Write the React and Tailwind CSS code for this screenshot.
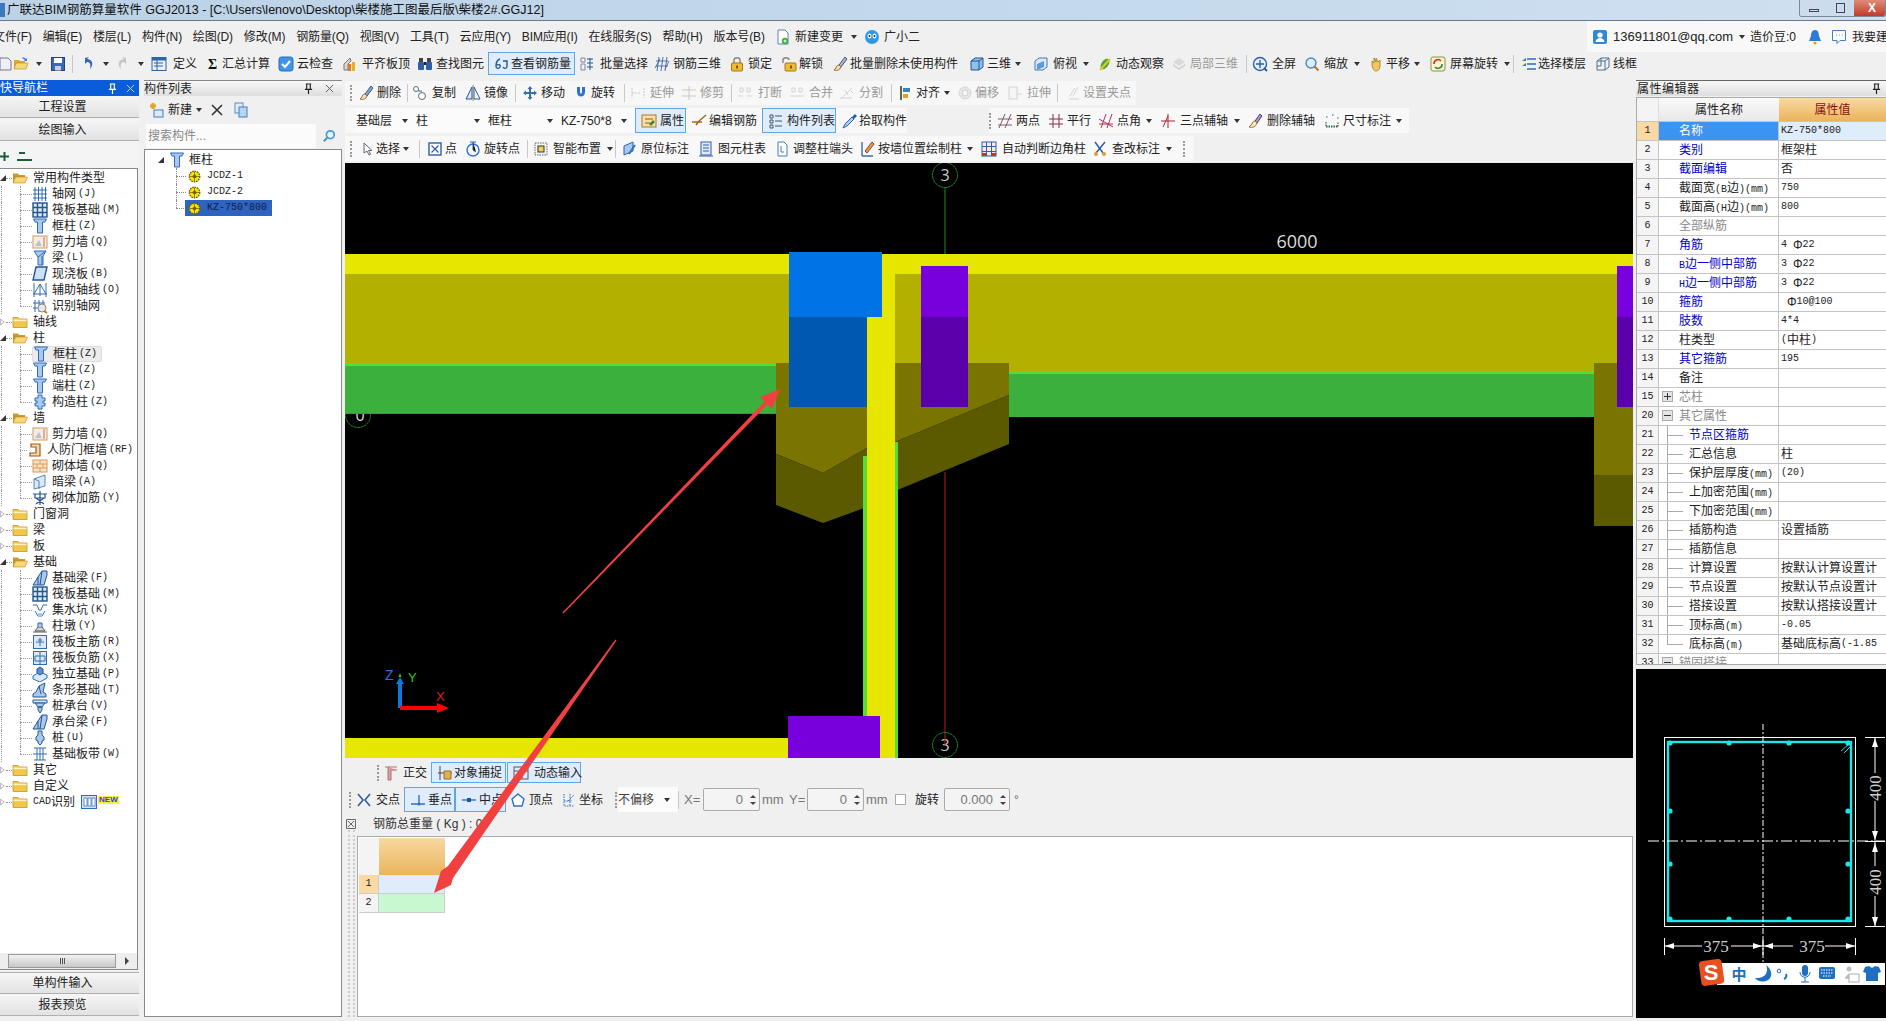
import React from 'react';

const B = '#2f6db5', L = '#a9c8ee', Y = '#f3c64a', O = '#b98a20';
const Svg = ({ children, className = 'w-4 h-4' }) => <svg viewBox="0 0 16 16" className={`${className} shrink-0`}>{children}</svg>;

const icons = {
  folderO: <><path d="M1 3.500h5l1 1.500h6v8H1z" fill="#c99a2a" /><path d="M1 13 3.500 7H15.500L13 13z" fill="#f7d774" stroke={O} strokeWidth=".6" /></>,
  folderC: <><path d="M1 3.500h5l1 1.500h8v8.500H1z" fill={Y} stroke={O} strokeWidth=".7" /><rect x="1.500" y="5.600" width="13" height="1.600" fill="#fff3bd" /></>,
  col: <path d="M1.500 1h13l-1.500 3h-2.500v11h-5V4H3z" fill={L} stroke={B} strokeWidth="1" />,
  grid: <path d="M3 1v14M6.500 1v14M10 1v14M13.500 1v14M1 4h14M1 8h14M1 12h14" stroke={B} strokeWidth="1" fill="none" />,
  raft: <><rect x="1" y="1" width="14" height="14" fill="#dbe8f8" stroke="#24568f" strokeWidth="1.400" /><path d="M5.500 1v14M10.500 1v14M1 5.500h14M1 10.500h14" stroke="#24568f" strokeWidth="1.400" /></>,
  wall: <><rect x="1" y="2" width="14" height="12" fill="#f4eee2" stroke="#d09a66" /><path d="M3 12 7 6l3 6z" fill="#b8c4d0" /><path d="M12 3v10" stroke="#d06a4a" /></>,
  beam: <><path d="M2 1h12l-3 5v9H6V7z" fill={L} stroke={B} /><path d="M6 7 14 1M10 15V6" stroke={B} /></>,
  slab: <path d="M4 1h11l-3 13H1z" fill="#cfe0f6" stroke="#24568f" strokeWidth="1.400" />,
  aux: <path d="M2 1v14M14 1v14M1 12h14M2 12 8 2l6 10M8 2v12" stroke={B} fill="none" />,
  idgrid: <><path d="M3 2v12M7 2v12M11 2v12M1 5h12M1 10h12" stroke={B} fill="none" /><circle cx="10" cy="10" r="4" fill="#e8e8e8" stroke="#888" /><path d="m12 13 3 2" stroke="#c08020" strokeWidth="2" /></>,
  door: <path d="M4 2h9v12H3v-3h6V5H4z" fill="#f6d9a8" stroke="#a05a20" strokeWidth="1.200" />,
  brick: <><rect x="1" y="2" width="14" height="12" fill="#fbe3c4" stroke="#d69a5a" /><path d="M1 6h14M1 10h14M8 2v4M5 6v4M11 6v4M8 10v4" stroke="#d69a5a" /></>,
  dbeam: <><path d="M2 5 13 1v11L2 15z" fill="#dbe8f8" stroke="#5b84b8" /><path d="M2 5l5 2v8" stroke="#5b84b8" fill="none" /></>,
  rwall: <path d="M1 4h14M8 1v14M3 4v4h10V4M4 8l8 6M12 8l-8 6" stroke="#24568f" strokeWidth="1.200" fill="none" />,
  gz: <path d="M6 1h4v3h3v3h-2v2h2v3h-3v3H6v-3H3V9h2V7H3V4h3z" fill={L} stroke={B} />,
  fbeam: <><path d="M10 1 15 1 15 5 12 15H1L6 7z" fill={L} stroke="#24568f" /><path d="M6 7v8M10 1 8 15" stroke="#24568f" /></>,
  pit: <><path d="M1 3h4l2 5h2l2-5h4M3 9l3 5h4l3-5" stroke={B} fill="none" /><path d="M6 11h4v3H6z" fill={L} /></>,
  pier: <><path d="M1 13h14v2H1z" fill="#b0b0b0" /><path d="M3 13 6 9h4l3 4z" fill="#d8d8d8" stroke="#555" /><path d="M6 9V5h4v4" fill={L} stroke={B} /></>,
  rmain: <><rect x="1.500" y="1.500" width="13" height="13" fill="#dbe8f8" stroke={B} /><path d="M8 4v8M4 8h8M6 6h4" stroke={B} fill="none" /></>,
  rneg: <><rect x="1.500" y="1.500" width="13" height="13" fill="#dbe8f8" stroke={B} /><path d="M8 2v12M3 6h10v5H3z" stroke={B} fill="none" /></>,
  iso: <><path d="M1 10 8 6l7 3v3l-7 4-7-3z" fill="#dbe8f8" stroke={B} /><path d="M5 3l3-2 3 2v4l-3 2-3-2z" fill="#5b8fd0" stroke="#24568f" /></>,
  strip: <><path d="M1 15v-3l3-2 3-6 6-3-2 9 3 2v3z" fill={L} stroke="#24568f" /><path d="M7 4l2 8" stroke="#24568f" /></>,
  cap: <><path d="M1 2h14v3H1z" fill="#dbe8f8" stroke="#24568f" /><path d="M3 5h10l-3 4H6zM6 9h4v3l-2 3-2-3z" fill={L} stroke="#24568f" /></>,
  pile: <path d="M6 1h4v4l2 2v3l-2 1v2l-2 2-2-2v-2l-2-1V7l2-2z" fill={L} stroke="#24568f" />,
  band: <path d="M2 2h12M2 14h12M5 2v12M11 2v12M8 2v12M1 8h14" stroke={B} fill="none" />,
  cad: <><rect x=".5" y="1.500" width="15" height="13" fill="#cfe2f8" stroke={B} /><rect x="3" y="4" width="3" height="8" fill="#fff" stroke={B} strokeWidth=".7" /><rect x="7" y="4" width="3" height="8" fill="#fff" stroke={B} strokeWidth=".7" /><rect x="11" y="4" width="3" height="8" fill="#fff" stroke={B} strokeWidth=".7" /></>,
  gear: <><circle cx="8" cy="8" r="6.500" fill="#f8e800" stroke="#6a5c00" strokeDasharray="2 1" strokeWidth="1.600" /><circle cx="8" cy="8" r="2.500" fill="#8a7a00" /><path d="M8 2v12M2 8h12" stroke="#6a5c00" strokeWidth=".9" /></>,
  doc: <><path d="M3 1h7l3 3v11H3z" fill="#fff" stroke="#5b84b8" /><circle cx="10" cy="12" r="3.200" fill="#47a83f" /><path d="M8.500 12h3M10 10.500v3" stroke="#fff" /></>,
  robot: <><circle cx="8" cy="8" r="7" fill="#2e9ae6" /><ellipse cx="5.500" cy="7" rx="2" ry="2.500" fill="#fff" /><ellipse cx="10.500" cy="7" rx="2" ry="2.500" fill="#fff" /><circle cx="5.500" cy="7" r="1" fill="#135" /><circle cx="10.500" cy="7" r="1" fill="#135" /></>,
  user: <><rect x="1" y="1" width="14" height="14" rx="2" fill="#2e8ad8" /><circle cx="8" cy="6" r="2.600" fill="#fff" /><path d="M3.500 13c.5-3 2.500-4 4.500-4s4 1 4.500 4z" fill="#fff" /></>,
  bell: <><path d="M8 1c3 0 4 3 4 6l2 5H2l2-5c0-3 1-6 4-6z" fill="#2e7ad8" /><circle cx="8" cy="14" r="1.500" fill="#e0a020" /></>,
  chat: <><path d="M1.500 1.500h13v10H9l-3 3v-3H1.500z" fill="#fff" stroke="#3d7fd0" /><path d="M5 6h.8M8 6h.8M11 6h.8" stroke="#3d7fd0" /></>,
  page: <path d="M3 2h8l3 3v9H3z" fill="#eef" stroke="#778" />,
  open: <><path d="M1 4h5l1 1h5v8H1z" fill="#d9a93a" /><path d="M1 13 3 7h12l-2 6z" fill="#f7d774" stroke={O} strokeWidth=".6" /><path d="M9 2c2-1 3 0 4 1l1-1v3h-3l1-1c-1-1-2-1-3-2z" fill="#3a7fd0" /></>,
  save: <><rect x="1.500" y="1.500" width="13" height="13" fill="#3b69b8" stroke="#24447f" /><rect x="4" y="2" width="8" height="5" fill="#fff" /><rect x="5" y="10" width="6" height="4.500" fill="#ccd" /></>,
  undo: <path d="M5 2v6l2-2c3 0 4 2 3 7 3-3 4-9-3-10L9 1z" fill="#2f64b8" />,
  redo: <path d="M11 2v6L9 6c-3 0-4 2-3 7-3-3-4-9 3-10L7 1z" fill="#a8a8a8" />,
  table: <><rect x="1" y="1.500" width="14" height="13" fill="#e8f0fa" stroke="#2f64a8" /><rect x="1" y="1.500" width="14" height="3" fill="#2f64a8" /><path d="M6 4v10M3 7h9M3 10h9" stroke="#2f64a8" /></>,
  sigma: <text x="2" y="13" fontSize="14" fontFamily="'Liberation Serif'" fontWeight="700" fill="#111">Σ</text>,
  check: <><rect x="1" y="1" width="14" height="14" rx="2.500" fill="#3d94e8" stroke="#2b6cb0" /><path d="m4 8 3 3 5-6" stroke="#fff" strokeWidth="2" fill="none" /></>,
  level: <><path d="M2 14V8l6-6 1 3-3 3v6z" fill="#d9d9d9" stroke="#777" /><rect x="6" y="8" width="3" height="7" fill="#e07a20" /><rect x="10" y="6" width="3" height="9" fill="#e8b020" /></>,
  binoc: <><rect x="2" y="2" width="4" height="4" fill="#444" /><rect x="10" y="2" width="4" height="4" fill="#444" /><rect x="1" y="6" width="6" height="8" rx="1" fill="#2f5ea8" /><rect x="9" y="6" width="6" height="8" rx="1" fill="#2f5ea8" /><rect x="7" y="6" width="2" height="3" fill="#222" /></>,
  rebar: <path d="M6 3C3 4 2 7 2 10s3 3 4 1-1-3-3-2M9 5h4v5c0 3-3 3-4 1" stroke="#24568f" strokeWidth="1.400" fill="none" />,
  batch: <><path d="M2 2h4v4H2zM2 8h4v6H2z" stroke="#7a8a9a" fill="#eef" /><path d="M8 3h6M8 7h6M8 11h6M11 2v12" stroke="#24568f" /></>,
  rebar3: <path d="M2 5h12M2 10h12M5 1 3 15M9 1 7 15M13 1l-2 14M1 12 6 3M15 5l-4 8" stroke="#3f66a0" fill="none" strokeWidth=".9" />,
  lock: <><path d="M5 7V4c0-3 6-3 6 0v3" stroke="#888" strokeWidth="1.500" fill="none" /><rect x="2.500" y="7" width="11" height="8" rx="1" fill="#eebb33" stroke="#a07818" /><rect x="7" y="9.500" width="2" height="3" fill="#7a5a10" /></>,
  unlock: <><path d="M2 7V4c0-3 6-3 6 0" stroke="#888" strokeWidth="1.500" fill="none" /><rect x="4" y="7" width="11" height="8" rx="1" fill="#eebb33" stroke="#a07818" /><rect x="9" y="9.500" width="2" height="3" fill="#7a5a10" /></>,
  brush: <><path d="M13 1 7 9l2 2 6-8z" fill="#a0b8d8" stroke="#556" /><path d="M7 9c-2 0-3 2-3 3l-2 2c3 1 6 0 7-3z" fill="#eeddbb" stroke="#a06a30" /></>,
  cube: <><path d="M2 5l4-3h8v9l-4 3H2z" fill="#8fc0ee" stroke="#24568f" /><path d="M2 5h8v9M10 5l4-3" stroke="#24568f" fill="none" /></>,
  cube2: <><path d="M2 5l4-3h8v9l-4 3H2z" fill="#dbeafa" stroke="#3f78b8" /><path d="M4 14V8l7-3v6z" fill="#5b9ade" /></>,
  orbit: <><ellipse cx="8" cy="8" rx="3.500" ry="6" fill="#47a83f" transform="rotate(35 8 8)" /><path d="M3 14 13 3" stroke="#e8c820" strokeWidth="2" /></>,
  part: <><path d="M8 2l6 4-6 4-6-4z" fill="#ccc" /><path d="M2 8l6 4 6-4v2l-6 4-6-4z" fill="#bbb" /></>,
  full: <><circle cx="8" cy="8" r="6.500" fill="#e4effb" stroke="#2f5ea8" strokeWidth="1.400" /><path d="M8 4v8M4 8h8" stroke="#2f5ea8" strokeWidth="1.400" /><path d="m12 12 3 3" stroke="#2f5ea8" strokeWidth="2" /></>,
  zoom: <><circle cx="7" cy="7" r="5" fill="#dcecfb" stroke="#4c87c8" strokeWidth="1.400" /><path d="m10.500 10.500 4 4" stroke="#b07820" strokeWidth="2" /></>,
  hand: <path d="M4 8V5l2 2V2l2 4V2l2 4 2-2v6c0 3-2 5-4 5s-4-3-4-7z" fill="#f0c860" stroke="#a07820" strokeWidth=".8" />,
  rotate: <><rect x="1" y="1" width="14" height="14" rx="2" fill="#fff3d0" stroke="#7a9a4a" /><path d="M4 8a4 4 0 0 1 7-3" stroke="#d03020" strokeWidth="1.600" fill="none" /><path d="M12 8a4 4 0 0 1-7 3" stroke="#2f8a3a" strokeWidth="1.600" fill="none" /></>,
  layers: <><path d="M6 3h9M6 8h9M6 13h9" stroke="#2f6db5" strokeWidth="1.600" /><path d="M5 2 1 5h4zM5 7 1 10h4z" fill="#2f9a4a" /></>,
  wire: <path d="M2 5l4-3h8v9l-4 3H2zM2 5h8v9M10 5l4-3M6 2v8H2" stroke="#4f6f90" fill="none" />,
  del: <><path d="M13 1 7 9l2 2 6-8z" fill="#7fa8d8" stroke="#456" /><path d="M7 9c-2 0-3 2-3 3l-2 2c3 1 6 0 7-3z" fill="#eee6c8" stroke="#a06a30" /></>,
  copy: <><circle cx="4" cy="4" r="2.500" fill="#fff" stroke="#667" /><circle cx="10" cy="11" r="3.500" fill="#fff" stroke="#667" /><path d="M6 6l4 0" stroke="#2f6db5" /></>,
  mirror: <><path d="M7 2v12H1z" fill="#dbe8f8" stroke="#24568f" /><path d="M9 2v12h6z" fill="#fff" stroke="#24568f" /><path d="M8 0v16" stroke="#888" /></>,
  move: <path d="M8 1l2.500 3H9v3h3V5.500L15 8l-3 2.500V9H9v3h1.500L8 15l-2.500-3H7V9H4v1.500L1 8l3-2.500V7h3V4H5.500z" fill="#3a6ea8" />,
  rot: <path d="M4 2v5c0 6 8 6 8 0V2h-3v5c0 2-2 2-2 0V2z" fill="#2f6fd0" />,
  ext: <path d="M2 3v10M2 8h8M14 3v10" stroke="#aaa" fill="none" strokeDasharray="2 1" />,
  trim: <path d="M8 1v14M1 5h14M1 11h14" stroke="#aaa" />,
  brk: <path d="M1 11h5M10 11h5M3 3h3v4H3zM10 3h3v4h-3z" stroke="#bbb" fill="none" />,
  merge: <path d="M1 11h14M3 3h3v4H3zM10 3h3v4h-3z" stroke="#bbb" fill="none" />,
  split: <path d="M1 13 13 13M3 13 13 3M6 5l3 5M12 6l2 2" stroke="#bbb" fill="none" />,
  align: <><path d="M3 1v14" stroke="#222" strokeWidth="1.400" /><rect x="5" y="3" width="7" height="4" fill="#3a7fd0" /><rect x="5" y="9" width="5" height="4" fill="#e0a030" /></>,
  off: <><circle cx="8" cy="8" r="6" fill="#ddd" stroke="#bbb" /><circle cx="8" cy="8" r="3" fill="#f4f4f4" stroke="#bbb" /></>,
  stretch: <><rect x="2" y="2" width="8" height="12" fill="#f4f4f4" stroke="#bbb" /><path d="M10 9h5" stroke="#bbb" /></>,
  grip: <path d="M3 14h10M12 2 7 11M9 3l-5 8" stroke="#bbb" fill="none" />,
  attr: <><rect x="1" y="2" width="14" height="12" fill="#f8e0a8" stroke="#b07820" /><path d="M4 6h8M4 10h5" stroke="#a05020" /><path d="m8 11 4-4 2 2-4 4z" fill="#3a8a3a" /></>,
  edit: <path d="M15 2 8 8M1 9h10M8 8l-3 4" stroke="#a06a20" strokeWidth="1.600" fill="none" />,
  list: <><path d="M2 2h3v3H2zM2 7h3v3H2zM2 12h3v3H2z" fill="none" stroke="#456" /><path d="M7 3h7M7 8h7M7 13h7" stroke="#456" strokeWidth="1.200" /></>,
  pick: <><path d="M13 1l2 2-3 3-2-2z" fill="#2f5ea8" /><path d="M10 4 3 11l-2 4 4-2 7-7z" fill="#a8d0f0" stroke="#2f5ea8" /></>,
  two: <path d="M2 15 8 1M8 15l6-14M1 6h14M1 12h14" stroke="#7a5a6a" fill="none" />,
  par: <path d="M5 1v14M11 1v14M1 6h14M1 11h14" stroke="#8a2a4a" fill="none" />,
  ang: <path d="M3 15 8 1M9 15l5-14M1 11h14M1 6 15 14" stroke="#b03050" fill="none" />,
  tri: <path d="M1 8h14M8 1v14M3 14 8 3" stroke="#b02030" fill="none" />,
  axdel: <><path d="M13 1 8 8l2 2 5-7z" fill="#b090d8" stroke="#446" /><path d="M8 8c-2 0-3 2-3 3l-3 3c3 1 7 0 8-4z" fill="#f0e8c0" stroke="#a06a30" /></>,
  dim: <path d="M2 9v5h12V9M2 13h12M2 4h2M8 2h2M13 5h2" stroke="#2a6a4a" strokeDasharray="1.500 1" fill="none" strokeWidth="1.200" />,
  sel: <path d="M5 2v10l3-2 2 4 1.500-.8-2-3.700h3.500z" fill="#fff" stroke="#667" />,
  pt: <><rect x="2" y="2" width="12" height="12" fill="#fff" stroke="#2f5ea8" strokeWidth="1.400" /><path d="m4.500 4.500 7 7m0-7-7 7" stroke="#2f5ea8" strokeWidth="1.200" /></>,
  rotpt: <><circle cx="8" cy="9" r="6" fill="none" stroke="#2f6fd0" strokeWidth="1.400" /><path d="M8 1v8l3 2" stroke="#2f5ea8" /><path d="M5 1h6" stroke="#2f5ea8" /></>,
  smart: <><rect x="2" y="2" width="12" height="12" fill="#f4f4f4" stroke="#666" strokeDasharray="1.500 1" /><rect x="5" y="5" width="6" height="6" fill="#f0d060" stroke="#333" /></>,
  mark: <><path d="M3 14V5l9-4v9z" fill="#a8c8f0" stroke="#2f5ea8" /><path d="m8 13 6-9" stroke="#2f6fd0" strokeWidth="2" /></>,
  coltab: <><rect x="3" y="1" width="10" height="13" fill="#e0ecfa" stroke="#2f5ea8" /><path d="M5 4h6M5 7h6M5 10h6M1 15h14" stroke="#2f5ea8" /></>,
  adj: <><path d="M4 1h6l3 3v11H4z" fill="#fff" stroke="#3f7fc0" /><path d="M7 5v6h3" stroke="#3f7fc0" fill="none" /></>,
  wallcol: <><path d="M3 1v14M3 15h11" stroke="#3a6ea8" strokeWidth="1.400" /><path d="m13 1-7 9 2 2 7-9z" fill="#e0a030" stroke="#845" /></>,
  auto: <><rect x="1" y="1" width="14" height="14" fill="#f8e8e8" stroke="#2f5ea8" /><path d="M5.500 1v14M10.500 1v14M1 5.500h14M1 10.500h14" stroke="#2f5ea8" /><rect x="1" y="12" width="4" height="3" fill="#d03020" /><rect x="11" y="12" width="4" height="3" fill="#d03020" /></>,
  chk: <><path d="M3 1l8 11M13 1 4 12" stroke="#2f5ea8" strokeWidth="1.500" /><circle cx="4" cy="13" r="2" fill="#e0a030" /><circle cx="12" cy="13" r="2" fill="#e0a030" /></>,
  ortho: <path d="M2 2h12M5 2v13h3V5h6" fill="#d8a0a0" stroke="#b07070" />,
  snap: <><path d="M3 1v14M1 8h14" stroke="#445" /><path d="M7 6h7v8H7z" fill="#e0b050" stroke="#a07020" /></>,
  dyn: <><rect x="1" y="2" width="14" height="12" fill="none" stroke="#556" /><path d="M1 6h14M5 10l5 3" stroke="#556" /></>,
  cross: <path d="m2 2 5 6-5 6m12-12L9 8l5 6" stroke="#2f5ea8" strokeWidth="1.600" fill="none" />,
  perp: <><path d="M1 12h14M9 3v9" stroke="#2f6fd0" strokeWidth="1.400" /><circle cx="9" cy="12" r="1.500" fill="#2f6fd0" /></>,
  mid: <><path d="M1 8h14" stroke="#2f6fd0" strokeWidth="1.400" /><rect x="6" y="6" width="4" height="4" fill="#24568f" /></>,
  vert: <path d="M8 2l6 5-2 7H4L2 7z" fill="#fff" stroke="#2f6fd0" strokeWidth="1.400" />,
  coord: <path d="M3 2v12h10M7 9l6-6M3 9h8M9 2v12" stroke="#2f6fd0" strokeDasharray="1.500 1" fill="none" />,
  plusNew: <><path d="M5 1v6M2 4h6" stroke="#e0a820" strokeWidth="3" /><rect x="6" y="8" width="9" height="7" fill="#dcecfb" stroke="#3f7fc0" /></>,
  copy2: <><rect x="2" y="1" width="8" height="10" fill="#dcecfb" stroke="#6a8ab0" /><rect x="6" y="5" width="8" height="10" fill="#b8d4f4" stroke="#3f7fc0" /></>,
};

const Ic = ({ n }) => <Svg>{icons[n]}</Svg>;
const Caret = ({ className = '' }) => <span className={`inline-block shrink-0 w-0 h-0 border-x-[3px] border-x-transparent border-t-[4px] border-t-[#333] ${className}`} />;
const Handle = ({ w = 'w-[8px]' }) => <div className={`${w} shrink-0 h-full flex items-center`}><div className="w-[2px] h-[16px] border-l-2 border-dotted border-[#999]" /></div>;
const Sep = ({ w }) => <div className={`${w} shrink-0 h-full flex items-center`}><div className="w-px h-[18px] bg-[#c8c8c8]" /></div>;

function Tool({ ic, t, w, drop, gray, active, gap = 'gap-[4px]' }) {
  return (
    <div className={`${w} ${gap} shrink-0 h-full flex items-center whitespace-nowrap ${gray ? 'text-[#9a9a9a]' : 'text-[#222]'} ${active ? 'bg-[#deecfb] border border-[#5fa6e4] pl-[5px]' : ''}`}>
      {ic && <span className={gray ? 'opacity-60 grayscale shrink-0' : 'shrink-0'}><Ic n={ic} /></span>}
      {t && <span>{t}</span>}
      {drop && <Caret className="ml-[2px]" />}
    </div>
  );
}

const Combo = ({ t, w }) => (
  <div className={`${w} shrink-0 h-full bg-[#fbfbfb] flex items-center justify-between pr-[8px] whitespace-nowrap overflow-hidden`}>
    <span>{t}</span><Caret />
  </div>
);

const Mix = ({ s }) => s.split(/([\x20-\x7e]+)/).map((p, i) => /^[\x20-\x7e]+$/.test(p)
  ? <span key={i} className="text-[10px] whitespace-pre [font-family:'Liberation_Mono',monospace]">{p}</span>
  : <span key={i}>{p}</span>);

const Pin = () => <svg viewBox="0 0 10 12" className="w-[9px] h-[11px] shrink-0"><path d="M2 1h6M3 1v6M7 1v6M1 7h8M5 7v5" stroke="currentColor" strokeWidth="1.300" fill="none" /></svg>;
const Cross = () => <svg viewBox="0 0 10 10" className="w-[9px] h-[9px] shrink-0"><path d="m1 1 8 8m0-8-8 8" stroke="currentColor" fill="none" /></svg>;

function TitleBar() {
  return (
    <div className="h-[21px] shrink-0 flex items-center border-b border-[#6a7a8a] bg-gradient-to-r from-[#bcd2e6] via-[#c3d8ec] to-[#cfe0f0] text-[#111] relative">
      <div className="w-[5px] h-[14px] bg-[#3a78c0] shrink-0" />
      <span className="ml-[2px] text-[12.500px] whitespace-nowrap">广联达BIM钢筋算量软件 GGJ2013 - [C:\Users\lenovo\Desktop\柴楼施工图最后版\柴楼2#.GGJ12]</span>
      <div className="ml-auto h-[17px] self-start flex border border-t-0 border-[#7a8a9a] rounded-b-[3px] overflow-hidden">
        <div className="w-[27px] flex items-end justify-center pb-[4px] bg-[#cddcec]"><div className="w-[10px] h-[3px] border border-[#445]" /></div>
        <div className="w-[27px] flex items-center justify-center bg-[#cddcec]"><div className="w-[9px] h-[10px] border border-[#445]" /></div>
        <div className="w-[31px] flex items-center bg-gradient-to-b from-[#e08a78] to-[#c0392b] text-white text-[12px] font-bold pl-[14px]">X</div>
      </div>
    </div>
  );
}

function MenuBar() {
  const items = ['文件(F)', '编辑(E)', '楼层(L)', '构件(N)', '绘图(D)', '修改(M)', '钢筋量(Q)', '视图(V)', '工具(T)', '云应用(Y)', 'BIM应用(I)', '在线服务(S)', '帮助(H)', '版本号(B)'];
  return (
    <div className="h-[31px] shrink-0 flex items-center whitespace-nowrap text-[#222]">
      <div className="flex gap-[10.800px] -ml-[7px] tracking-[-0.1px]">{items.map(t => <span key={t}>{t}</span>)}</div>
      <div className="ml-[10px] flex items-center gap-[4px]"><Ic n="doc" /><span>新建变更</span><Caret className="ml-[4px]" /></div>
      <div className="ml-[7px] flex items-center gap-[4px]"><Ic n="robot" /><span>广小二</span></div>
      <div className="ml-auto h-full flex items-center bg-[#f8f8f8] pl-[5px] gap-[5px]">
        <Ic n="user" /><span className="text-[13px]">136911801@qq.com</span><Caret className="ml-px" />
        <span>造价豆:0</span>
        <span className="ml-[6px]"><Ic n="bell" /></span>
        <span className="ml-[3px]"><Ic n="chat" /></span>
        <span className="w-[34px] overflow-hidden">我要建</span>
      </div>
    </div>
  );
}

function TopToolbar() {
  return (
    <div className="h-[23px] shrink-0 flex items-center">
      <div className="w-[13px] shrink-0 h-full flex items-center justify-end overflow-hidden"><Ic n="page" /></div>
      <Tool w="w-[37px]" ic="open" drop gap="gap-[5px]" />
      <Tool w="w-[22px]" ic="save" />
      <Sep w="w-[8px]" />
      <Tool w="w-[35px]" ic="undo" drop gap="gap-[5px]" />
      <Tool w="w-[36px]" ic="redo" drop gray gap="gap-[5px]" />
      <Tool w="w-[55px]" ic="table" t="定义" gap="gap-[6px]" />
      <Tool w="w-[72px]" ic="sigma" t="汇总计算" gap="gap-0" />
      <Tool w="w-[64px]" ic="check" t="云检查" gap="gap-[3px]" />
      <Tool w="w-[75px]" ic="level" t="平齐板顶" />
      <Tool w="w-[71px]" ic="binoc" t="查找图元" gap="gap-[3px]" />
      <Tool w="w-[87px] mr-[4px]" ic="rebar" t="查看钢筋量" active gap="gap-[1px]" />
      <Tool w="w-[75px]" ic="batch" t="批量选择" gap="gap-[5px]" />
      <Tool w="w-[75px]" ic="rebar3" t="钢筋三维" gap="gap-[3px]" />
      <Tool w="w-[52px]" ic="lock" t="锁定" gap="gap-[3px]" />
      <Tool w="w-[51px]" ic="unlock" t="解锁" gap="gap-[2px]" />
      <Tool w="w-[137px]" ic="brush" t="批量删除未使用构件" gap="gap-[2px]" />
      <Tool w="w-[64px]" ic="cube" t="三维" gap="gap-[2px]" drop />
      <Tool w="w-[64px]" ic="cube2" t="俯视" drop />
      <Tool w="w-[74px]" ic="orbit" t="动态观察" gap="gap-[3px]" />
      <Tool w="w-[75px]" ic="part" t="局部三维" gray gap="gap-[3px]" />
      <Sep w="w-[6px]" />
      <Tool w="w-[52px]" ic="full" t="全屏" />
      <Tool w="w-[64px]" ic="zoom" t="缩放" drop />
      <Tool w="w-[62px]" ic="hand" t="平移" gap="gap-[2px]" drop />
      <Tool w="w-[83px]" ic="rotate" t="屏幕旋转" drop />
      <Sep w="w-[8px]" />
      <Tool w="w-[74px]" ic="layers" t="选择楼层" gap="gap-[1px]" />
      <Tool w="w-[42px]" ic="wire" t="线框" gap="gap-[2px]" />
    </div>
  );
}

const treeData = [
  ['o', '常用构件类型'], ['c', 'grid', '轴网', '(J)'], ['c', 'raft', '筏板基础', '(M)'], ['c', 'col', '框柱', '(Z)'], ['c', 'wall', '剪力墙', '(Q)'], ['c', 'beam', '梁', '(L)'], ['c', 'slab', '现浇板', '(B)'], ['c', 'aux', '辅助轴线', '(O)'], ['e', 'idgrid', '识别轴网', ''],
  ['f', '轴线'], ['o', '柱'], ['s', 'col', '框柱', '(Z)'], ['c', 'col', '暗柱', '(Z)'], ['c', 'col', '端柱', '(Z)'], ['e', 'gz', '构造柱', '(Z)'],
  ['o', '墙'], ['c', 'wall', '剪力墙', '(Q)'], ['c', 'door', '人防门框墙', '(RF)'], ['c', 'brick', '砌体墙', '(Q)'], ['c', 'dbeam', '暗梁', '(A)'], ['e', 'rwall', '砌体加筋', '(Y)'],
  ['f', '门窗洞'], ['f', '梁'], ['f', '板'], ['o', '基础'], ['c', 'fbeam', '基础梁', '(F)'], ['c', 'raft', '筏板基础', '(M)'], ['c', 'pit', '集水坑', '(K)'], ['c', 'pier', '柱墩', '(Y)'], ['c', 'rmain', '筏板主筋', '(R)'], ['c', 'rneg', '筏板负筋', '(X)'], ['c', 'iso', '独立基础', '(P)'], ['c', 'strip', '条形基础', '(T)'], ['c', 'cap', '桩承台', '(V)'], ['c', 'fbeam', '承台梁', '(F)'], ['c', 'pile', '桩', '(U)'], ['e', 'band', '基础板带', '(W)'],
  ['f', '其它'], ['f', '自定义'],
];

const Exp = ({ open }) => open
  ? <svg viewBox="0 0 6 6" className="w-[6px] h-[6px] shrink-0"><path d="M6 0v6H0z" fill="#333" /></svg>
  : <svg viewBox="0 0 6 8" className="w-[5px] h-[8px] shrink-0"><path d="M.5.500 5 4 .5 7.500z" fill="#fff" stroke="#aaa" /></svg>;

function TreeRow({ r }) {
  const k = r[0];
  if (k === 'o' || k === 'f') {
    return (
      <div className="h-[16px] flex items-center whitespace-nowrap">
        <div className="w-[6px] flex justify-start"><Exp open={k === 'o'} /></div>
        <div className="w-[6px] border-t border-dotted border-[#999]" />
        <Ic n={k === 'o' ? 'folderO' : 'folderC'} />
        <span className="ml-[5px]">{r[1]}</span>
      </div>
    );
  }
  return (
    <div className="h-[16px] flex items-center whitespace-nowrap relative">
      <div className="absolute left-[1px] top-0 h-full border-l border-dotted border-[#999]" />
      <div className={`absolute left-[20px] top-0 border-l border-dotted border-[#999] ${k === 'e' ? 'h-[8px]' : 'h-full'}`} />
      <div className="ml-[20px] w-[12px] border-t border-dotted border-[#999]" />
      <div className={`flex items-center h-[16px] pr-[4px] ${k === 's' ? 'bg-[#ececec] border border-[#ddd] rounded-[2px]' : ''}`}>
        <Ic n={r[1]} />
        <span className="ml-[4px]">{r[2]}</span>
        <span className="ml-[2px] text-[10px] [font-family:'Liberation_Mono',monospace]">{r[3]}</span>
      </div>
    </div>
  );
}

function NavButton({ t, className = '' }) {
  return <div className={`h-[22px] shrink-0 flex items-center justify-center pr-[14px] border-b border-[#b0b0b0] bg-gradient-to-b from-[#f6f6f6] to-[#e2e2e2] ${className}`}>{t}</div>;
}

function LeftNav() {
  return (
    <div className="w-[139px] shrink-0 flex flex-col">
      <div className="h-[16px] shrink-0 bg-[#0a5cd8] text-white flex items-center whitespace-nowrap">
        <span>快导航栏</span>
        <span className="ml-[60px]"><Pin /></span>
        <span className="ml-[9px] text-[#cfe0ff]"><Cross /></span>
      </div>
      <NavButton t="工程设置" />
      <NavButton t="绘图输入" className="mt-px" />
      <div className="h-[27px] shrink-0 bg-[#f4f4f4] flex items-end pb-[7px] gap-[8px]">
        <svg viewBox="0 0 9 9" className="w-[9px] h-[9px]"><path d="M4.500 0v9M0 4.500h9" stroke="#1f5a3a" strokeWidth="2" /></svg>
        <svg viewBox="0 0 15 9" className="w-[15px] h-[9px]"><path d="M2 1h6M0 8h15" stroke="#1f5a3a" strokeWidth="2" /></svg>
      </div>
      <div className="h-[802px] shrink-0 w-[138px] bg-white border-t border-r border-b border-[#8a8a8a] flex flex-col overflow-hidden">
        <div className="flex-1 pt-[1px]">
          {treeData.map((r, i) => <TreeRow key={i} r={r} />)}
          <div className="h-[16px] flex items-center whitespace-nowrap">
            <div className="w-[6px]"><Exp /></div>
            <div className="w-[6px] border-t border-dotted border-[#999]" />
            <Ic n="folderC" />
            <span className="ml-[5px] flex items-center"><span className="text-[10px] [font-family:'Liberation_Mono',monospace]">CAD</span>识别</span>
            <span className="ml-[6px]"><Ic n="cad" /></span>
            <span className="ml-px -mt-[5px] h-[8px] px-[1px] bg-[#ffe94a] text-[#1a4fc0] text-[8px] leading-[8px] font-bold">NEW</span>
          </div>
        </div>
        <div className="h-[16px] shrink-0 bg-[#eeeeee] flex items-center">
          <div className="ml-[8px] w-[108px] h-[14px] bg-gradient-to-b from-[#f2f2f2] to-[#c8c8c8] border border-[#999] flex items-center justify-center gap-px">
            <div className="w-px h-[6px] bg-[#555]" /><div className="w-px h-[6px] bg-[#555]" /><div className="w-px h-[6px] bg-[#555]" />
          </div>
          <div className="ml-[9px] w-0 h-0 border-y-[4px] border-y-transparent border-l-[4px] border-l-[#444]" />
        </div>
      </div>
      <NavButton t="单构件输入" className="mt-[2px] border-t" />
      <NavButton t="报表预览" />
    </div>
  );
}

function ListPanel() {
  return (
    <div className="w-[198px] shrink-0 ml-[5px] flex flex-col h-[937px]">
      <div className="h-[16px] shrink-0 flex items-center border-t border-[#888] bg-gradient-to-b from-[#f8f8f8] to-[#dedede] whitespace-nowrap">
        <span>构件列表</span>
        <span className="ml-auto"><Pin /></span>
        <span className="ml-[12px] mr-[8px] text-[#555]"><Cross /></span>
      </div>
      <div className="h-[27px] shrink-0 flex items-center pl-[4px]">
        <Ic n="plusNew" />
        <span className="ml-[4px]">新建</span>
        <Caret className="ml-[4px]" />
        <svg viewBox="0 0 12 12" className="ml-[9px] w-[12px] h-[12px]"><path d="m1 1 10 10m0-10L1 11" stroke="#333" strokeWidth="1.600" /></svg>
        <span className="ml-[10px]"><Ic n="copy2" /></span>
      </div>
      <div className="h-[26px] shrink-0 flex items-center">
        <div className="ml-[2px] w-[170px] h-[24px] bg-[#fbfbfb] text-[#888] flex items-center pl-[2px]">搜索构件...</div>
        <svg viewBox="0 0 16 16" className="ml-[6px] w-[14px] h-[14px]"><circle cx="9.500" cy="6.500" r="4.500" fill="#e8f2fb" stroke="#4a9ad8" strokeWidth="2" /><path d="M6 10 2 14" stroke="#4a9ad8" strokeWidth="2.400" /></svg>
      </div>
      <div className="flex-1 bg-white border border-[#8a8a8a] pt-[2px] relative">
        <div className="h-[16px] flex items-center pl-[13px]">
          <Exp open />
          <span className="ml-[5px] -mt-px"><Ic n="col" /></span>
          <span className="ml-[4px]">框柱</span>
        </div>
        {['JCDZ-1', 'JCDZ-2', 'KZ-750*800'].map((t, i) => (
          <div key={t} className="h-[16px] flex items-center relative">
            <div className={`absolute left-[31px] top-0 border-l border-dotted border-[#888] ${i === 2 ? 'h-[8px]' : 'h-full'}`} />
            <div className="ml-[31px] w-[10px] border-t border-dotted border-[#888]" />
            <div className={`flex items-center h-[16px] w-[87px] -ml-px pl-[1px] ${i === 2 ? 'bg-[#2f63c0]' : ''}`}>
              <Svg className="w-[13px] h-[13px] ml-[2px]">{icons.gear}</Svg>
              <span className={`ml-[6px] text-[10px] [font-family:'Liberation_Mono',monospace] ${i === 2 ? 'text-[#10204a]' : ''}`}>{t}</span>
            </div>
          </div>
        ))}
      </div>
    </div>
  );
}

function CenterToolbars() {
  return (
    <div className="h-[83px] shrink-0 flex flex-col">
      <div className="h-[24px] mt-px w-[791px] flex items-center bg-[#f7f7f7] pl-[5px]">
        <Handle />
        <Tool w="w-[49px]" ic="del" t="删除" gap="gap-[3px]" />
        <Sep w="w-[5px]" />
        <Tool w="w-[53px]" ic="copy" t="复制" />
        <Tool w="w-[50px]" ic="mirror" t="镜像" gap="gap-[3px]" />
        <Sep w="w-[7px]" />
        <Tool w="w-[51px]" ic="move" t="移动" gap="gap-[3px]" />
        <Tool w="w-[51px]" ic="rot" t="旋转" gap="gap-[2px]" />
        <Sep w="w-[6px]" />
        <Tool w="w-[51px]" ic="ext" t="延伸" gray />
        <Tool w="w-[50px]" ic="trim" t="修剪" gray gap="gap-[3px]" />
        <Sep w="w-[6px]" />
        <Tool w="w-[52px]" ic="brk" t="打断" gray gap="gap-[5px]" />
        <Tool w="w-[50px]" ic="merge" t="合并" gray />
        <Tool w="w-[52px]" ic="split" t="分割" gray />
        <Sep w="w-[7px]" />
        <Tool w="w-[59px]" ic="align" t="对齐" drop gap="gap-[2px]" />
        <Tool w="w-[50px]" ic="off" t="偏移" gray gap="gap-[2px]" />
        <Tool w="w-[50px]" ic="stretch" t="拉伸" gray />
        <Sep w="w-[9px]" />
        <Tool w="w-[66px]" ic="grip" t="设置夹点" gray gap="gap-px" />
      </div>
      <div className="h-[25px] mt-[3px] flex items-center">
        <div className="flex h-full items-center bg-[#f8f8f8] pl-[11px]">
          <Combo t="基础层" w="w-[60px]" />
          <Combo t="柱" w="w-[72px]" />
          <Combo t="框柱" w="w-[73px]" />
          <Combo t="KZ-750*8" w="w-[74px]" />
          <Tool w="w-[51px] mr-[5px]" ic="attr" t="属性" active gap="gap-[3px]" />
          <Tool w="w-[71px]" ic="edit" t="编辑钢筋" gap="gap-[2px]" />
          <Tool w="w-[74px] mr-[6px]" ic="list" t="构件列表" active gap="gap-[3px]" />
          <Tool w="w-[65px]" ic="pick" t="拾取构件" gap="gap-px" />
        </div>
        <div className="w-[82px] shrink-0" />
        <div className="flex h-full items-center bg-[#f8f8f8]">
          <Handle />
          <Tool w="w-[51px]" ic="two" t="两点" gap="gap-[3px]" />
          <Tool w="w-[50px]" ic="par" t="平行" gap="gap-[3px]" />
          <Tool w="w-[62px]" ic="ang" t="点角" drop gap="gap-[3px]" />
          <Tool w="w-[87px]" ic="tri" t="三点辅轴" drop />
          <Tool w="w-[77px]" ic="axdel" t="删除辅轴" />
          <Tool w="w-[85px]" ic="dim" t="尺寸标注" drop gap="gap-[3px]" />
        </div>
      </div>
      <div className="h-[25px] mt-[3px] flex items-center">
        <div className="flex h-full items-center bg-[#f8f8f8] pl-[5px] pr-[8px]">
          <Handle w="w-[9px]" />
          <Tool w="w-[60px]" ic="sel" t="选择" drop gap="gap-px" />
          <Sep w="w-[8px]" />
          <Tool w="w-[38px]" ic="pt" t="点" gap="gap-[2px]" />
          <Tool w="w-[62px]" ic="rotpt" t="旋转点" gap="gap-[3px]" />
          <Sep w="w-[6px]" />
          <Tool w="w-[82px]" ic="smart" t="智能布置" drop />
          <Sep w="w-[6px]" />
          <Tool w="w-[77px]" ic="mark" t="原位标注" />
          <Tool w="w-[76px]" ic="coltab" t="图元柱表" />
          <Tool w="w-[85px]" ic="adj" t="调整柱端头" gap="gap-[3px]" />
          <Tool w="w-[122px]" ic="wallcol" t="按墙位置绘制柱" drop gap="gap-[3px]" />
          <Tool w="w-[111px]" ic="auto" t="自动判断边角柱" gap="gap-[5px]" />
          <Tool w="w-[91px]" ic="chk" t="查改标注" drop gap="gap-[4px]" />
          <Handle w="w-[3px]" />
        </div>
      </div>
    </div>
  );
}

function Canvas() {
  return (
    <div className="h-[595px] shrink-0 bg-black">
      <svg viewBox="345 163 1288 595" className="w-[1288px] h-[595px] block">
        <rect x="345" y="254" width="1288" height="20" fill="#e6e600" />
        <rect x="345" y="274" width="1272" height="97" fill="#b3b000" />
        <line x1="945" y1="187" x2="945" y2="254" stroke="#1c8a2c" />
        <line x1="945" y1="472" x2="945" y2="733" stroke="#b02020" />
        <ellipse cx="945" cy="175" rx="12.500" ry="12.500" fill="none" stroke="#1c8a2c" strokeDasharray="3 .5" />
        <text x="945" y="181" fontSize="16" fill="#ccc" textAnchor="middle" fontFamily="'Open Sans'">3</text>
        <ellipse cx="945" cy="745" rx="12.500" ry="12.500" fill="none" stroke="#1c8a2c" strokeDasharray="3 .5" />
        <text x="945" y="751" fontSize="16" fill="#ccc" textAnchor="middle" fontFamily="'Open Sans'">3</text>
        <line x1="945" y1="733" x2="945" y2="745" stroke="#b02020" />
        <circle cx="358" cy="415" r="12.500" fill="none" stroke="#1c8a2c" strokeDasharray="3 .5" />
        <text x="360" y="421" fontSize="16" fill="#ddd" textAnchor="middle" fontFamily="'Open Sans'">0</text>
        <rect x="345" y="363" width="431" height="50" fill="#3cb03c" />
        <rect x="345" y="363" width="431" height="3" fill="#55dd33" />
        <rect x="345" y="413" width="431" height="1" fill="#c05a20" />
        <rect x="1009" y="371" width="585" height="46" fill="#3cb03c" />
        <rect x="1009" y="371" width="585" height="3" fill="#55dd33" />
        <path d="M776 363H1009V395L895 442 867 448 823 473 776 454z" fill="#7a7500" />
        <path d="M776 454 823 473 867 448V507L823 523 776 505z" fill="#5c5a00" />
        <path d="M895 442 1009 395V444L895 491z" fill="#5c5a00" />
        <rect x="863" y="456" width="4" height="300" fill="#55dd33" />
        <rect x="895" y="442" width="3" height="316" fill="#55dd33" />
        <path d="M882 274H895V758H867V317H882z" fill="#e6e600" />
        <rect x="789" y="252" width="93" height="65" fill="#0073e6" />
        <rect x="789" y="317" width="78" height="90" fill="#0058b0" />
        <rect x="921" y="266" width="47" height="51" fill="#7700dd" />
        <rect x="921" y="317" width="47" height="90" fill="#5a00aa" />
        <rect x="1594" y="363" width="39" height="112" fill="#7a7500" />
        <rect x="1594" y="475" width="39" height="51" fill="#5c5a00" />
        <rect x="1617" y="266" width="16" height="51" fill="#7700dd" />
        <rect x="1617" y="317" width="16" height="90" fill="#5a00aa" />
        <rect x="345" y="738" width="443" height="20" fill="#e6e600" />
        <rect x="788" y="716" width="92" height="42" fill="#7700dd" />
        <text x="1297" y="248" fontSize="18" fill="#ddd" textAnchor="middle" fontFamily="'Open Sans'">6000</text>
        <path d="M398 708v-24h-2l4-7 4 7h-2v24z" fill="#0a7ae0" />
        <path d="M400 706h37v-3l12 5-12 5v-3h-37z" fill="#f00" />
        <path d="m398.500 677 1.500-4 1.500 4z" fill="#2c2" />
        <text x="385" y="680" fontSize="14" fill="#3a6ae0" fontFamily="'Liberation Sans'">Z</text>
        <text x="408" y="682" fontSize="13" fill="#2c2" fontFamily="'Liberation Sans'">Y</text>
        <text x="436" y="701" fontSize="13" fill="#d22" fontFamily="'Liberation Sans'">X</text>
      </svg>
    </div>
  );
}

const Spin = () => (
  <div className="flex flex-col gap-[4px] ml-[7px] items-center">
    <span className="w-0 h-0 border-x-[3px] border-x-transparent border-b-[3px] border-b-[#444]" />
    <span className="w-0 h-0 border-x-[3px] border-x-transparent border-t-[3px] border-t-[#444]" />
  </div>
);
const NumIn = ({ v, w }) => (
  <div className={`${w} shrink-0 h-[23px] border border-[#aaa] rounded-[2px] bg-[#f4f4f4] flex items-center justify-end pr-[3px] text-[#777] text-[13px]`}>
    <span>{v}</span><Spin />
  </div>
);

function BottomPanels() {
  return (
    <div className="flex-1 flex flex-col min-h-0">
      <div className="h-[21px] mt-[4px] flex items-center">
        <div className="ml-[32px] w-[6px]"><Handle w="w-[6px]" /></div>
        <Tool w="w-[48px]" ic="ortho" t="正交" />
        <Tool w="w-[75px] mr-px" ic="snap" t="对象捕捉" active gap="gap-px" />
        <Tool w="w-[74px]" ic="dyn" t="动态输入" active gap="gap-[5px]" />
      </div>
      <div className="h-[25px] mt-[4px] flex items-center text-[#444]">
        <div className="ml-[4px]"><Handle w="w-[7px]" /></div>
        <Tool w="w-[48px]" ic="cross" t="交点" />
        <Tool w="w-[51px]" ic="perp" t="垂点" active gap="gap-[2px]" />
        <Tool w="w-[51px] mr-[4px]" ic="mid" t="中点" active gap="gap-[2px]" />
        <Tool w="w-[51px]" ic="vert" t="顶点" gap="gap-[3px]" />
        <Tool w="w-[54px]" ic="coord" t="坐标" gap="gap-[2px]" />
        <Handle w="w-[3px]" />
        <Combo t="不偏移" w="w-[60px]" />
        <Sep w="w-[6px]" />
        <span className="w-[19px] text-[#777] text-[13px]">X=</span>
        <NumIn v="0" w="w-[57px]" />
        <span className="ml-[2px] w-[27px] text-[#777] text-[13px]">mm</span>
        <span className="w-[18px] text-[#777] text-[13px]">Y=</span>
        <NumIn v="0" w="w-[57px]" />
        <span className="ml-[2px] w-[25px] text-[#777] text-[13px]">mm</span>
        <div className="w-[4px]" />
        <div className="w-[11px] h-[11px] border border-[#aaa] bg-white shrink-0" />
        <span className="ml-[9px] w-[29px] text-[#222]">旋转</span>
        <NumIn v="0.000" w="w-[66px]" />
        <span className="ml-[4px] text-[#666]">°</span>
      </div>
      <div className="h-[24px] flex items-center">
        <svg viewBox="0 0 10 10" className="ml-px w-[10px] h-[10px]"><path d="M.5.500h9v9h-9zM2 2l6 6m0-6L2 8" fill="#eee" stroke="#666" /></svg>
        <span className="ml-[17px] whitespace-pre text-[#333]">钢筋总重量 ( Kg ) : 0</span>
      </div>
      <div className="flex-1 flex min-h-0 mb-[4px]">
        <div className="w-[12px] shrink-0 flex justify-center -mt-[6px]">
          <div className="w-[7px] h-full border-x-2 border-dotted border-[#ccc]" />
        </div>
        <div className="flex-1 bg-white border border-[#aaa] pl-[1px] pt-[1px]">
          <div className="flex">
            <div className="w-[20px] h-[37px] bg-[#f4f4f4]" />
            <div className="w-[66px] h-[37px] bg-gradient-to-b from-[#f8d9a0] to-[#eab45c]" />
          </div>
          <div className="flex h-[19px]">
            <div className="w-[20px] bg-[#fad9a2] border-b border-r border-[#ccc] flex items-center justify-center text-[10px] [font-family:'Liberation_Mono',monospace]">1</div>
            <div className="w-[66px] bg-[#deecfb] border-b border-r border-[#ccc]" />
          </div>
          <div className="flex h-[19px]">
            <div className="w-[20px] bg-[#f4f4f4] border-b border-r border-[#ccc] flex items-center justify-center text-[10px] [font-family:'Liberation_Mono',monospace]">2</div>
            <div className="w-[66px] bg-[#c8f8d0] border-b border-r border-[#ccc]" />
          </div>
        </div>
      </div>
    </div>
  );
}

const BL = 'text-[#0000c8]', GR = 'text-[#8a8a8a]', BK = 'text-[#222]';
const props = [
  ['1', '名称', 'sel', 'KZ-750*800'], ['2', '类别', BL, '框架柱'], ['3', '截面编辑', BL, '否'], ['4', '截面宽(B边)(mm)', BK, '750'], ['5', '截面高(H边)(mm)', BK, '800'], ['6', '全部纵筋', GR, ''],
  ['7', '角筋', BL, '4 Φ22'], ['8', 'B边一侧中部筋', BL, '3 Φ22'], ['9', 'H边一侧中部筋', BL, '3 Φ22'], ['10', '箍筋', BL, ' Φ10@100'], ['11', '肢数', BL, '4*4'], ['12', '柱类型', BK, '(中柱)'], ['13', '其它箍筋', BL, '195'], ['14', '备注', BK, ''],
  ['15', '芯柱', GR, '', '+'], ['20', '其它属性', GR, '', '-'],
  ['21', '节点区箍筋', BL, '', 't'], ['22', '汇总信息', BK, '柱', 't'], ['23', '保护层厚度(mm)', BK, '(20)', 't'], ['24', '上加密范围(mm)', BK, '', 't'], ['25', '下加密范围(mm)', BK, '', 't'], ['26', '插筋构造', BK, '设置插筋', 't'], ['27', '插筋信息', BK, '', 't'], ['28', '计算设置', BK, '按默认计算设置计', 't'], ['29', '节点设置', BK, '按默认节点设置计', 't'], ['30', '搭接设置', BK, '按默认搭接设置计', 't'], ['31', '顶标高(m)', BK, '-0.05', 't'], ['32', '底标高(m)', BK, '基础底标高(-1.85', 'l'], ['33', '锚固搭接', GR, '', '-'],
];

function PropRow({ p }) {
  const [n, label, cls, val, kind] = p;
  const sel = cls === 'sel';
  return (
    <div className="h-[19px] shrink-0 flex border-b border-[#c4c4c4] whitespace-nowrap overflow-hidden">
      <div className={`w-[22px] shrink-0 flex items-center justify-center border-r border-[#c4c4c4] text-[10px] [font-family:'Liberation_Mono',monospace] ${sel ? 'bg-[#fad9a2]' : 'bg-[#f4f4f4]'}`}>{n}</div>
      <div className={`w-[120px] shrink-0 flex items-center border-r border-[#c4c4c4] relative ${sel ? 'bg-[#3d94f0] text-white' : cls}`}>
        {(kind === '+' || kind === '-') && (
          <div className="absolute left-[3px] top-[3px] w-[11px] h-[11px] bg-[#e4e4e4] border border-[#aaa] flex items-center justify-center">
            <svg viewBox="0 0 7 7" className="w-[7px] h-[7px]"><path d={kind === '+' ? 'M0 3.500h7M3.500 0v7' : 'M0 3.500h7'} stroke="#333" /></svg>
          </div>
        )}
        {(kind === 't' || kind === 'l') && (
          <>
            <div className={`absolute left-[8px] top-0 border-l border-[#aaa] ${kind === 'l' ? 'h-[9px]' : 'h-full'}`} />
            <div className="absolute left-[8px] top-[9px] w-[16px] border-t border-[#aaa]" />
          </>
        )}
        <span className={kind === 't' || kind === 'l' ? 'ml-[30px]' : 'ml-[20px]'}><Mix s={label} /></span>
      </div>
      <div className={`flex-1 flex items-center pl-[2px] ${sel ? 'bg-[#deecfb]' : ''}`}><Mix s={val} /></div>
    </div>
  );
}

function RightPanel() {
  return (
    <div className="w-[250px] shrink-0 ml-[3px] flex flex-col">
      <div className="h-[16px] shrink-0 flex items-center border-t border-[#666] bg-gradient-to-b from-[#f8f8f8] to-[#dedede] whitespace-nowrap pl-px">
        <span className="tracking-[0.5px]">属性编辑器</span>
        <span className="ml-auto mr-[5px]"><Pin /></span>
      </div>
      <div className="h-[568px] shrink-0 mt-[1px] border border-[#aaa] border-r-0 bg-white flex flex-col overflow-hidden">
        <div className="h-[24px] shrink-0 flex border-b border-[#c4c4c4]">
          <div className="w-[22px] shrink-0 bg-[#f4f4f4] border-r border-[#ddd]" />
          <div className="w-[120px] shrink-0 bg-gradient-to-b from-[#fafafa] to-[#e8e8e8] flex items-center justify-center">属性名称</div>
          <div className="flex-1 bg-gradient-to-b from-[#f8d9a0] to-[#eab45c] flex items-center justify-center text-[#8a1010]">属性值</div>
        </div>
        {props.map(p => <PropRow key={p[0]} p={p} />)}
      </div>
      <div className="mt-[4px] h-[349px] bg-black shrink-0">
        <svg viewBox="1637 668 249 349" className="w-[249px] h-[349px] block">
          <rect x="1665.500" y="736.500" width="191" height="189" fill="none" stroke="#fff" />
          <rect x="1669" y="741" width="183" height="179" fill="none" stroke="#1ce6e6" strokeWidth="2.400" />
          <path d="M1764 723V962" stroke="#fff" strokeDasharray="6 2 2 2" />
          <path d="M1649 840H1886" stroke="#fff" strokeDasharray="11 3 2 3" />
          {[[1671, 742], [1730, 742], [1790, 742], [1849, 742], [1671, 810], [1849, 810], [1671, 863], [1849, 863], [1671, 918], [1730, 918], [1790, 918], [1849, 918]].map(([x, y], i) => (
            <circle key={i} cx={x} cy={y} r="2.600" fill="#1ce6e6" />
          ))}
          <path d="M1842 750l8-7M1845 752l7-7" stroke="#1ce6e6" />
          <path d="M1866 736.500h20M1866 840.500h20M1866 925.500h20M1876 737V772M1876 800V865M1876 895V925" stroke="#fff" />
          <path d="M1665.500 937V954M1856.500 937V954M1764 937V954M1666 945H1703M1732 945H1794M1826 945H1856" stroke="#fff" />
          <path d="M1876 737l-3 9h6zM1876 839l-3-9h6zM1876 842l-3 9h6zM1876 925l-3-9h6zM1666 945l9-3v6zM1763 945l-9-3v6zM1765 945l9-3v6zM1856 945l-9-3v6z" fill="#fff" />
          <text x="1717" y="951" fontSize="17" fill="#ccc" textAnchor="middle" fontFamily="'Liberation Serif'">375</text>
          <text x="1813" y="951" fontSize="17" fill="#ccc" textAnchor="middle" fontFamily="'Liberation Serif'">375</text>
          <text transform="translate(1882 787) rotate(-90)" fontSize="17" fill="#ccc" textAnchor="middle" fontFamily="'Liberation Serif'">400</text>
          <text transform="translate(1882 881) rotate(-90)" fontSize="17" fill="#ccc" textAnchor="middle" fontFamily="'Liberation Serif'">400</text>
          <rect x="1718" y="962" width="168" height="22" fill="#fff" />
          <rect x="1701" y="959" width="23" height="25" rx="4" fill="#e8501f" transform="rotate(-8 1712 971)" />
          <text x="1712" y="979" fontSize="22" fontWeight="700" fill="#fff" textAnchor="middle" fontFamily="'Liberation Sans'">S</text>
          <text x="1740" y="979" fontSize="15" fontWeight="700" fill="#1f6fc0" textAnchor="middle" fontFamily="'Noto Sans CJK SC'">中</text>
          <path d="M1767 964c3 6 0 14-11 13 3 5 14 5 16-2 1-4-1-8-5-11z" fill="#1f6fc0" />
          <circle cx="1780" cy="970" r="1.800" fill="none" stroke="#1f6fc0" /><path d="M1787 973c1 2 0 4-2 5" stroke="#1f6fc0" strokeWidth="2" fill="none" />
          <rect x="1803" y="964" width="6" height="11" rx="3" fill="#1f6fc0" /><path d="M1801 971c0 7 10 7 10 0M1806 976v5M1802 981h8" stroke="#1f6fc0" fill="none" />
          <rect x="1820" y="966" width="16" height="12" rx="2" fill="#1f6fc0" /><path d="M1822 969h12M1822 972h12M1824 975h8" stroke="#fff" strokeDasharray="1.500 1" />
          <circle cx="1850" cy="968" r="2.500" fill="#b8c0c8" /><path d="M1846 978c0-6 8-6 8 0z" fill="#b8c0c8" /><rect x="1850" y="973" width="10" height="8" fill="#fff" stroke="#a8b0b8" />
          <path d="M1866 966l4-1 3 2 3-2 4 1 2 5-3 1v8h-12v-8l-3-1z" fill="#1f6fc0" />
        </svg>
      </div>
    </div>
  );
}

function Arrows() {
  return (
    <svg viewBox="0 0 1886 1021" className="absolute inset-0 w-[1886px] h-[1021px] pointer-events-none">
      <path d="M562.500 612.500 563.500 613.500 767.400 404.400 772 409 780 389 760 397 764.600 401.600z" fill="#f04040" />
      <path d="M615.500 639.500 616.500 640.500 453 878 451 885 434 893 441 871 448 866z" fill="#f04040" />
    </svg>
  );
}

export default function App() {
  return (
    <div className="relative w-[1886px] h-[1021px] overflow-hidden bg-[#f0f0f0] text-[12px] leading-none text-[#222] flex flex-col [font-family:'Liberation_Sans','Noto_Sans_CJK_SC',sans-serif]">
      <TitleBar />
      <MenuBar />
      <TopToolbar />
      <div className="h-[5px] shrink-0" />
      <div className="flex flex-1 min-h-0">
        <LeftNav />
        <ListPanel />
        <div className="w-[1288px] shrink-0 ml-[3px] flex flex-col">
          <CenterToolbars />
          <Canvas />
          <BottomPanels />
        </div>
        <RightPanel />
      </div>
      <Arrows />
    </div>
  );
}
